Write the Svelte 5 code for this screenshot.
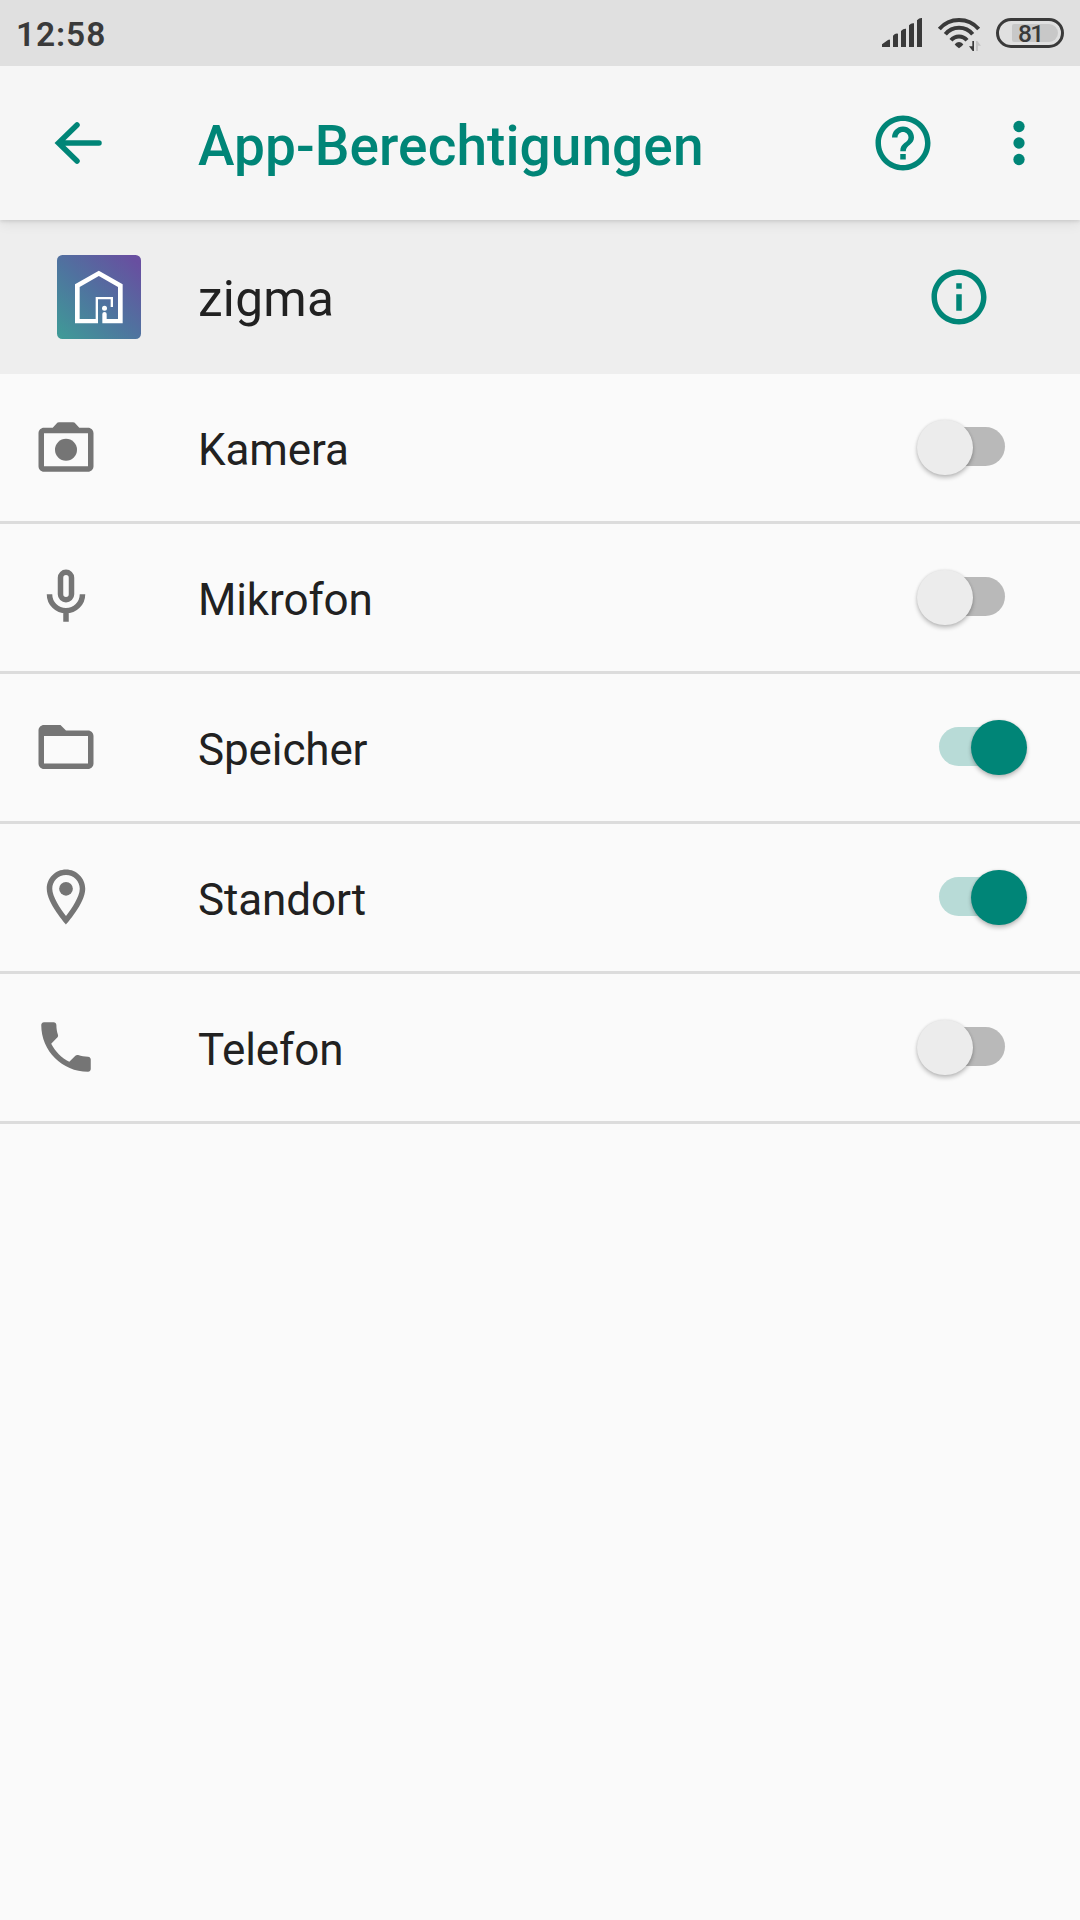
<!-- App.svelte -->
<script>
  let permissions = $state([
    { id: "camera", label: "Kamera", granted: false },
    { id: "mic", label: "Mikrofon", granted: false },
    { id: "storage", label: "Speicher", granted: true },
    { id: "location", label: "Standort", granted: true },
    { id: "phone", label: "Telefon", granted: false },
  ]);

  const toggle = (permission) => {
    permission.granted = !permission.granted;
  };
</script>

<main>
  <div class="status-bar">
    <span class="clock">12:58</span>
    <div class="status-icons">
      <svg class="signal" viewBox="60 48 132 99">
        <path d="M66 141v-8l18-13q6-3 6 1v20zM99 141v-34q7-8 15-6v40zM123 141V93q7-8 15-7v55zM147 141V76q7-8 15-6v71zM171 141V61q7-8 15-7v87z" />
      </svg>
      <svg class="wifi" viewBox="231 48 135 108">
        <g class="waves">
          <path d="M238 87a78 78 0 0 1 118 0" />
          <path d="M256 103a53 53 0 0 1 82 0" />
          <path d="M273 121a31 31 0 0 1 48 0" />
        </g>
        <path d="M284 133q13-14 26 0q-2 4-13 12q-11-8-13-12z" />
        <path d="M342 123v30h-4l-11-14h10v-16z" />
        <path class="idle" d="M348 153v-30h4l11 14h-9v16z" />
      </svg>
      <div class="battery">
        <div class="level">81</div>
      </div>
    </div>
  </div>

  <header>
    <button class="back" aria-label="Zurück">
      <svg viewBox="0 0 50 44">
        <path d="M23 4 4.500 22 23 40M5 22H45" />
      </svg>
    </button>
    <h1>App-Berechtigungen</h1>
    <button class="help" aria-label="Hilfe">
      <svg class="icon" viewBox="0 0 24 24">
        <path d="M11 18h2v-2h-2v2zm1-16C6.480 2 2 6.480 2 12s4.480 10 10 10 10-4.480 10-10S17.520 2 12 2zm0 18c-4.410 0-8-3.590-8-8s3.590-8 8-8 8 3.590 8 8-3.590 8-8 8zm0-14c-2.210 0-4 1.790-4 4h2c0-1.100.9-2 2-2s2 .9 2 2c0 2-3 1.750-3 5h2c0-2.250 3-2.500 3-5 0-2.210-1.790-4-4-4z" />
      </svg>
    </button>
    <button class="more" aria-label="Mehr">
      <svg class="icon" viewBox="0 0 24 24">
        <circle cx="12" cy="6" r="2.050" />
        <circle cx="12" cy="12" r="2.050" />
        <circle cx="12" cy="18" r="2.050" />
      </svg>
    </button>
  </header>

  <section class="app-row">
    <svg class="logo" viewBox="81 75 252 252">
      <defs>
        <linearGradient id="logo-bg" x1="0.050" y1="1" x2="0.920" y2="0.050">
          <stop offset="0" stop-color="#3f9a97" />
          <stop offset="0.500" stop-color="#4f739f" />
          <stop offset="1" stop-color="#684fa0" />
        </linearGradient>
      </defs>
      <rect x="81" y="75" width="252" height="252" rx="16" fill="url(#logo-bg)" />
      <path class="house" d="M135 163 206.500 122 278 163V280H217V252q0-6 6.500-6t6.500 6V267H264V171L206.500 138 149 171V267H197V201H249V231H242V208H204V280H135z" />
      <circle class="house" cx="223.500" cy="235" r="7.500" />
    </svg>
    <span class="app-name">zigma</span>
    <svg class="icon info" viewBox="0 0 24 24">
      <path d="M11 17h2v-6h-2v6zm1-15C6.480 2 2 6.480 2 12s4.480 10 10 10 10-4.480 10-10S17.520 2 12 2zm0 18c-4.410 0-8-3.590-8-8s3.590-8 8-8 8 3.590 8 8-3.590 8-8 8zM11 9h2V7h-2v2z" />
    </svg>
  </section>

  <div class="list">
    {#each permissions as permission (permission.id)}
      <div class="row">
        <svg class="icon" viewBox="0 0 24 24">
          {#if permission.id === "camera"}
            <path fill-rule="evenodd" d="M20 5h-3.170L15.500 3.500Q15.100 3 14.500 3h-5Q8.900 3 8.500 3.500L7.170 5H4c-1.100 0-2 .9-2 2v12c0 1.100.9 2 2 2h16c1.100 0 2-.9 2-2V7c0-1.100-.9-2-2-2zm0 14H4V7h16v12z" />
            <circle cx="12" cy="13" r="4" />
          {:else if permission.id === "mic"}
            <g class="stroked">
              <rect x="10" y="3" width="4" height="10" rx="2" />
              <path d="M6 11a6 6 0 0 0 12 0M12 17v4" />
            </g>
          {:else if permission.id === "storage"}
            <path fill-rule="evenodd" d="M20 6h-8l-2-2H4c-1.100 0-2 .9-2 2v12c0 1.100.9 2 2 2h16c1.100 0 2-.9 2-2V8c0-1.100-.9-2-2-2zm0 12H4V8h16v10z" />
          {:else if permission.id === "location"}
            <path d="M12 2C8.130 2 5 5.130 5 9c0 5.250 7 13 7 13s7-7.750 7-13c0-3.870-3.130-7-7-7zM7 9c0-2.760 2.240-5 5-5s5 2.240 5 5c0 2.880-2.880 7.190-5 9.880C9.920 16.210 7 11.850 7 9z" />
            <circle cx="12" cy="9" r="2.500" />
          {:else}
            <path d="M6.620 10.790c1.440 2.830 3.760 5.140 6.590 6.590l2.200-2.200c.27-.27.67-.36 1.020-.24 1.120.37 2.330.57 3.570.57.55 0 1 .45 1 1V20c0 .55-.45 1-1 1-9.390 0-17-7.610-17-17 0-.55.45-1 1-1h3.500c.55 0 1 .45 1 1 0 1.250.2 2.450.57 3.570.11.35.03.74-.25 1.020l-2.200 2.200z" />
          {/if}
        </svg>
        <span class="label">{permission.label}</span>
        <button
          class="switch"
          class:on={permission.granted}
          role="switch"
          aria-checked={permission.granted}
          aria-label={permission.label}
          onclick={() => toggle(permission)}
        >
          <span class="track"></span>
          <span class="thumb"></span>
        </button>
      </div>
    {/each}
  </div>
</main>

<style>
  :global(body) {
    margin: 0;
    background: #fafafa;
  }

  main {
    min-height: 1920px;
    background: #fafafa;
    color: #212121;
    font-family: Roboto, sans-serif;
  }

  button {
    display: flex;
    padding: 0;
    border: none;
    background: none;
    cursor: pointer;
  }

  svg {
    display: block;
    flex: none;
  }

  .icon {
    width: 66px;
    height: 66px;
    fill: currentColor;
  }

  .status-bar {
    position: relative;
    z-index: 1;
    display: flex;
    align-items: center;
    justify-content: space-between;
    box-sizing: border-box;
    height: 66px;
    padding: 0 16px;
    background: #e0e0e0;
    color: #3a3a3a;
  }

  .clock {
    padding-top: 2px;
    font-size: 33.5px;
    font-weight: 600;
    letter-spacing: 0.9px;
  }

  .status-icons {
    display: flex;
    align-items: flex-start;
    height: 34px;
    fill: #3a3a3a;
  }

  .signal {
    width: 44px;
    height: 33px;
    margin-right: 13px;
  }

  .wifi {
    width: 45px;
    height: 36px;
    margin-right: 14px;
  }

  .waves {
    fill: none;
    stroke: #3a3a3a;
    stroke-width: 12;
  }

  .idle {
    fill: #c4c4c4;
  }

  .battery {
    box-sizing: border-box;
    width: 68px;
    height: 30px;
    margin-top: 2px;
    padding: 3px 3px 3px 13px;
    border: 3px solid #3a3a3a;
    border-radius: 15px;
  }

  .level {
    box-sizing: border-box;
    width: 46px;
    height: 18px;
    padding-left: 6px;
    border-radius: 2px 9px 9px 2px;
    background: #c8c8c8;
    font-size: 24.5px;
    font-weight: 500;
    line-height: 20px;
    letter-spacing: -1.6px;
  }

  header {
    position: relative;
    display: flex;
    align-items: center;
    box-sizing: border-box;
    height: 154px;
    padding: 0 28px 0 54px;
    background: #f6f6f6;
    color: #008577;
    box-shadow: 0 1px 4px rgba(0, 0, 0, 0.13), 0 4px 12px rgba(0, 0, 0, 0.07);
  }

  .back,
  .help,
  .more {
    color: #008577;
  }

  .back svg {
    width: 50px;
    height: 44px;
    fill: none;
    stroke: currentColor;
    stroke-width: 5.5;
    stroke-linecap: round;
  }

  h1 {
    flex: 1;
    margin: 0;
    padding: 5px 0 0 94px;
    font-size: 55px;
    font-weight: 500;
    line-height: 64px;
    letter-spacing: 0.07px;
  }

  .help {
    margin-right: 50px;
  }

  .app-row {
    display: flex;
    align-items: center;
    height: 154px;
    padding: 0 88px 0 57px;
    background: #eeeeee;
  }

  .logo {
    width: 84px;
    height: 84px;
  }

  .house {
    fill: #fff;
  }

  .app-name {
    flex: 1;
    padding: 4px 0 0 57px;
    font-size: 49.5px;
    line-height: 58px;
    letter-spacing: 0.3px;
  }

  .info {
    color: #008577;
  }

  .row {
    display: flex;
    align-items: center;
    box-sizing: border-box;
    height: 150px;
    padding: 0 53px 1px 33px;
    border-bottom: 3px solid #dcdcdc;
  }

  .row .icon {
    color: #757575;
  }

  .stroked {
    fill: none;
    stroke: currentColor;
    stroke-width: 2;
  }

  .label {
    flex: 1;
    padding: 5px 0 0 99px;
    font-size: 44px;
    line-height: 52px;
    letter-spacing: -0.12px;
  }

  .switch {
    position: relative;
    align-items: center;
    justify-content: center;
    width: 110px;
    height: 56px;
  }

  .track {
    width: 66px;
    height: 39px;
    margin-bottom: 1px;
    border-radius: 20px;
    background: #b9b9b9;
  }

  .thumb {
    position: absolute;
    top: 0.5px;
    left: 0.25px;
    width: 55.5px;
    height: 55.5px;
    border-radius: 50%;
    background: #ececec;
    box-shadow: 0 3px 4px rgba(0, 0, 0, 0.22), 0 0 3px rgba(0, 0, 0, 0.12);
  }

  .on .track {
    background: #b8dbd7;
  }

  .on .thumb {
    left: 54.25px;
    background: #008577;
  }
</style>
